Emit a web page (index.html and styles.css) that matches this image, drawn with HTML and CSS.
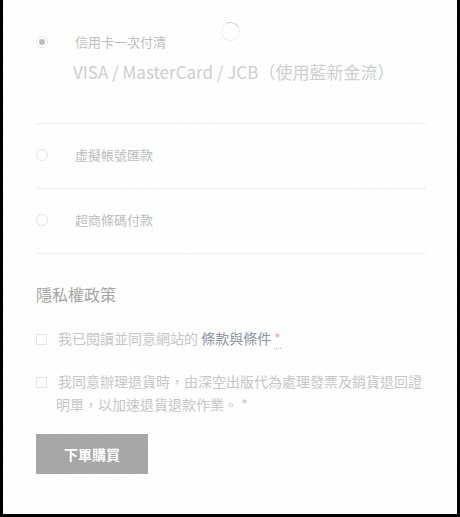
FILE: index.html
```html
<!DOCTYPE html>
<html>
<head>
<meta name="viewport" content="width=device-width, initial-scale=1">
<link rel="stylesheet" href="styles.css">
</head>
<body>

<div class="frame">
  <div class="checkout">

    <ul class="payment-methods">
      <li class="method">
        <div class="method-row">
          <span class="radio checked"></span>
          <label>信用卡一次付清</label>
        </div>
        <p class="method-desc">VISA / MasterCard / JCB（使用藍新金流）</p>
      </li>
      <li class="method">
        <div class="method-row">
          <span class="radio"></span>
          <label>虛擬帳號匯款</label>
        </div>
      </li>
      <li class="method">
        <div class="method-row">
          <span class="radio"></span>
          <label>超商條碼付款</label>
        </div>
      </li>
    </ul>

    <h3 class="policy-title">隱私權政策</h3>

    <p class="terms"><span class="checkbox"></span>我已閱讀並同意網站的 <a href="#">條款與條件</a> <abbr class="required">*</abbr></p>
    <p class="terms"><span class="checkbox"></span>我同意辦理退貨時，由深空出版代為處理發票及銷貨退回證明單，以加速退貨退款作業。 *</p>

    <button class="place-order" type="button">下單購買</button>

  </div>

  <div class="spinner"></div>
</div>

</body>
</html>
```

FILE: styles.css
```css
body {
    margin: 0;
    font-family: "Noto Sans CJK TC", "Noto Sans", sans-serif;
    background: #fff;
}

.frame {
    position: relative;
    height: 517px;
    box-sizing: border-box;
    border-left: 3px solid #000;
    border-right: 3px solid #000;
    border-bottom: 3px solid #000;
    background: repeating-linear-gradient(-45deg, #fff 0, #fff 3px, #fbfbfb 3px, #fbfbfb 4px);
}

.checkout {
    margin-left: 33px;
    width: 390px;
}

.payment-methods {
    list-style: none;
    margin: 0;
    padding: 0;
}

.method {
    padding: 21px 0 23px;
    border-bottom: 1px solid #eeeeee;
}

.method:first-child {
    padding-top: 32px;
    padding-bottom: 38px;
}

.method-row {
    display: flex;
    align-items: center;
    height: 20px;
}

.method-row label {
    font-size: 13px;
    color: #bdbdbd;
    line-height: 20px;
}

.radio {
    width: 10px;
    height: 10px;
    border: 1px solid #e4e4e4;
    border-radius: 50%;
    background: #fff;
    margin-right: 27px;
    display: flex;
    align-items: center;
    justify-content: center;
}

.radio.checked::after {
    content: "";
    width: 6px;
    height: 6px;
    border-radius: 50%;
    background: #bdbdbd;
}

.method-desc {
    margin: 7px 0 0 37px;
    font-size: 17px;
    line-height: 26px;
    color: #cecece;
}

.policy-title {
    margin: 28px 0 0;
    font-size: 16px;
    font-weight: normal;
    line-height: 24px;
    color: #a3a3a3;
}

.terms {
    margin: 21px 0 0;
    padding-left: 20px;
    font-size: 14px;
    line-height: 23px;
    color: #c6c6c6;
}

.terms + .terms {
    margin-top: 20px;
}

.checkbox {
    display: inline-block;
    width: 9px;
    height: 9px;
    border: 1px solid #e4e4e4;
    background: #fff;
    margin-left: -20px;
    margin-right: 11px;
    vertical-align: -1px;
}

.terms a {
    color: #8d93a2;
    text-decoration: none;
}

.required {
    color: #f3a4a4;
    text-decoration: none;
    border-bottom: 1px dotted #f3a4a4;
}

.place-order {
    display: block;
    margin-top: 18px;
    width: 112px;
    height: 40px;
    border: 0;
    background: #a7a7a7;
    color: #fff;
    font-family: inherit;
    font-size: 14px;
    font-weight: bold;
}

.spinner {
    position: absolute;
    top: 22px;
    left: 218px;
    width: 17px;
    height: 17px;
    border: 1.5px solid #eeeeee;
    border-top-color: #cfcfcf;
    border-radius: 50%;
    transform: rotate(20deg);
}
```
